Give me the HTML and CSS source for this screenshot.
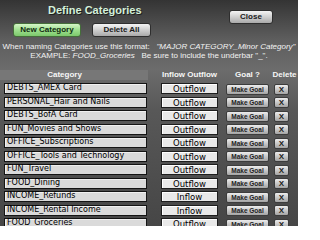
FILE: index.html
```html
<!DOCTYPE html>
<html>
<head>
<meta charset="utf-8">
<link rel="stylesheet" href="styles.css">
</head>
<body>
<div class="page">
  <div class="top">
    <div class="left">
      <div class="title">Define Categories</div>
      <div class="btns">
        <div class="btn green">New Category</div>
        <div class="btn gray">Delete All</div>
      </div>
    </div>
    <div class="right">
      <div class="btn gray close">Close</div>
    </div>
  </div>
  <div class="info">
    <div class="line">When naming Categories use this format:   <i>"MAJOR CATEGORY_Minor Category"</i></div>
    <div class="line">EXAMPLE: <i>FOOD_Groceries</i>   Be sure to include the underbar "_".</div>
  </div>
  <div class="head">
    <div class="h-cat">Category</div>
    <div class="h-flow">Inflow Outflow</div>
    <div class="h-goal">Goal ?</div>
    <div class="h-del">Delete</div>
  </div>
  <div class="rows">
    <div class="row"><div class="cat">DEBTS_AMEX Card</div><div class="flow">Outflow</div><div class="goal">Make Goal</div><div class="del">X</div></div>
    <div class="row"><div class="cat">PERSONAL_Hair and Nails</div><div class="flow">Outflow</div><div class="goal">Make Goal</div><div class="del">X</div></div>
    <div class="row"><div class="cat">DEBTS_BofA Card</div><div class="flow">Outflow</div><div class="goal">Make Goal</div><div class="del">X</div></div>
    <div class="row"><div class="cat">FUN_Movies and Shows</div><div class="flow">Outflow</div><div class="goal">Make Goal</div><div class="del">X</div></div>
    <div class="row"><div class="cat">OFFICE_Subscriptions</div><div class="flow">Outflow</div><div class="goal">Make Goal</div><div class="del">X</div></div>
    <div class="row"><div class="cat">OFFICE_Tools and Technology</div><div class="flow">Outflow</div><div class="goal">Make Goal</div><div class="del">X</div></div>
    <div class="row"><div class="cat">FUN_Travel</div><div class="flow">Outflow</div><div class="goal">Make Goal</div><div class="del">X</div></div>
    <div class="row"><div class="cat">FOOD_Dining</div><div class="flow">Outflow</div><div class="goal">Make Goal</div><div class="del">X</div></div>
    <div class="row"><div class="cat">INCOME_Refunds</div><div class="flow">Inflow</div><div class="goal">Make Goal</div><div class="del">X</div></div>
    <div class="row"><div class="cat">INCOME_Rental Income</div><div class="flow">Inflow</div><div class="goal">Make Goal</div><div class="del">X</div></div>
    <div class="row"><div class="cat">FOOD_Groceries</div><div class="flow">Outflow</div><div class="goal">Make Goal</div><div class="del">X</div></div>
  </div>
</div>
</body>
</html>
```

FILE: styles.css
```css
html, body {
  margin: 0;
  padding: 0;
}
body {
  width: 298px;
  height: 226px;
  overflow: hidden;
  font-family: "Liberation Sans", Arial, sans-serif;
}
.page {
  width: 298px;
  height: 226px;
  overflow: hidden;
  background: linear-gradient(#343434 0px, #5e5e5e 40px, #6c6c6c 70px, #585858 110px, #464646 226px);
}
.top {
  display: flex;
}
.left {
  padding-left: 13px;
  width: 150px;
}
.title {
  margin: 4px 0 6px 35px;
  font-size: 11px;
  line-height: 13px;
  font-weight: bold;
  color: #d4f0da;
  text-shadow: 1px 1px 0 #1e1e1e;
  white-space: nowrap;
}
.btns {
  display: flex;
  gap: 11px;
}
.btn {
  height: 12px;
  line-height: 12px;
  font-size: 8px;
  font-weight: bold;
  text-align: center;
  border-radius: 3px;
  white-space: nowrap;
}
.green {
  width: 66px;
  border: 1px solid #456e3a;
  color: #102a10;
  background: linear-gradient(#d6f6c8, #9ee08e 50%, #7cc86c);
}
.gray {
  border: 1px solid #2e2e2e;
  color: #1a1a1a;
  background: linear-gradient(#f4f4f4, #cfcfcf 50%, #a9a9a9);
}
.btns .gray {
  width: 57px;
}
.right {
  padding-left: 66px;
  padding-top: 10px;
}
.close {
  width: 42px;
}
.info {
  margin-top: 5px;
  color: #f2f2f2;
  font-size: 8px;
  line-height: 9px;
  text-align: center;
}
.line {
  white-space: pre;
}
.head {
  margin-top: 10px;
  display: flex;
  height: 10px;
  line-height: 10px;
  font-size: 8px;
  font-weight: bold;
  color: #f6f6f6;
  white-space: nowrap;
}
.h-cat {
  width: 148px;
  padding-right: 19px;
  box-sizing: border-box;
  text-align: center;
  background: #777;
}
.h-flow {
  margin-left: 13px;
  width: 57px;
  text-align: center;
}
.h-goal {
  margin-left: 8px;
  width: 43px;
  text-align: center;
}
.h-del {
  margin-left: 3px;
  width: 25px;
  text-align: center;
}
.rows {
  margin-top: 3px;
  display: flex;
  flex-direction: column;
  gap: 2.5px;
}
.row {
  display: flex;
  align-items: flex-start;
  height: 11px;
  font-family: "DejaVu Sans", Verdana, sans-serif;
  font-size: 8px;
  color: #000;
}
.cat {
  margin-left: 4px;
  width: 143px;
  height: 11px;
  box-sizing: border-box;
  border: 1px solid #141414;
  background: #dadada;
  box-shadow: inset 1px 1px 0 #f0f0f0;
  padding-left: 2px;
  line-height: 8.5px;
  white-space: nowrap;
}
.flow {
  margin-left: 14px;
  width: 57px;
  height: 11px;
  box-sizing: border-box;
  border: 1px solid #1e1e1e;
  background: #e9e9e9;
  box-shadow: inset 1px 1px 0 #fff;
  text-align: center;
  line-height: 10px;
  font-size: 8.5px;
}
.goal, .del {
  height: 11px;
  margin-top: 0.5px;
  box-sizing: border-box;
  border: 1px solid #3c3c3c;
  border-radius: 2px;
  background: linear-gradient(#ececec, #c8c8c8 50%, #a4a4a4);
  text-align: center;
  line-height: 9px;
  font-family: "Liberation Sans", Arial, sans-serif;
  font-weight: bold;
  color: #222;
}
.goal {
  margin-left: 8px;
  width: 43px;
  font-size: 6.5px;
}
.del {
  margin-left: 5px;
  width: 15px;
  font-size: 8px;
}
```
